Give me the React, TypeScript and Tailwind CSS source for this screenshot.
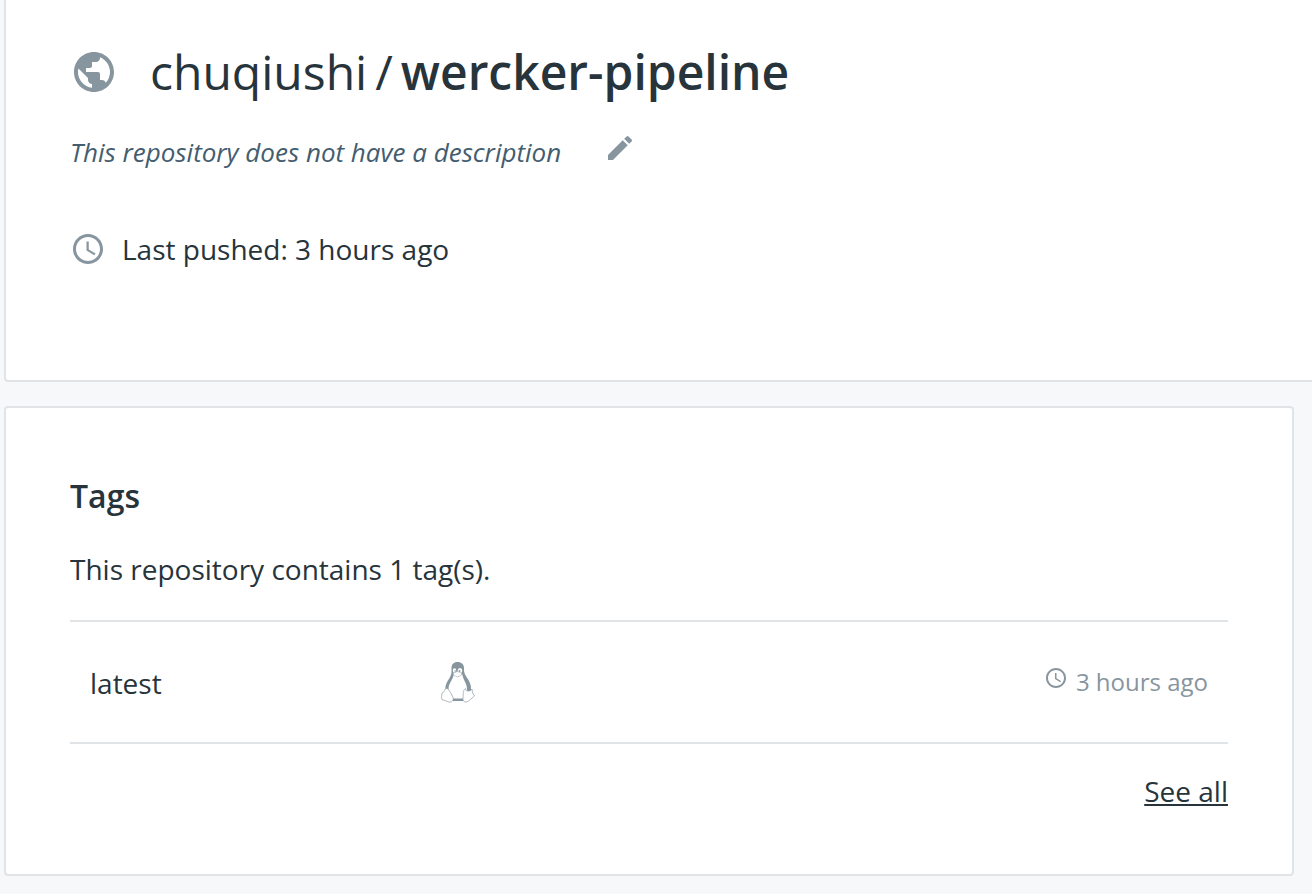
import React from "react";
import { MdPublic, MdEdit, MdAccessTime } from "react-icons/md";

function Penguin() {
  return (
    <svg role="img" aria-label="Linux" viewBox="0 0 34 42" className="h-[42px] w-[34px]" fill="none">
      <path d="M16.500 1c-4 0-6 2.500-6 6 0 4 .5 6-2 10C6 21 4 24 4.500 29l6 11h13.500l6-11c.5-5-1.500-9-4.500-13-2.500-4-2.500-5.500-2.500-9 0-3.500-2.500-6-6.500-6z" fill="#87959e" />
      <path d="M12.500 14c0 4-5 8-5 14 0 3 4 5 4.500 9.500h11c1-5 3-5.500 3-9.500 0-6-4.500-10-4.500-14.500l-4.500 2.500z" fill="#fff" />
      <ellipse cx="13.500" cy="9.500" rx="1.700" ry="2.300" fill="#fff" />
      <ellipse cx="19" cy="9.500" rx="2.300" ry="2.500" fill="#fff" />
      <circle cx="14.200" cy="10" r=".8" fill="#87959e" />
      <circle cx="18.500" cy="10" r=".9" fill="#87959e" />
      <path d="M12.200 12.500l4-2 4.800 2-.5 1.500-4 2-3.500-1.500z" fill="#fff" stroke="#a8b2b9" strokeWidth=".5" />
      <path d="M5.500 27.500c2.500 0 4 4.500 6.200 8 1.500 3.500-.7 6-3.700 5.500L1 38.500c-1-1.500 0-4 0-6.500 2.500 0 2-4.500 4.500-4.500z" fill="#fff" stroke="#8f9ca5" strokeWidth=".7" />
      <path d="M24.500 27.500c0 3 4.500 3.500 6.500.500l.5 4 2 3-6 5c-3 2-6 1-5.500-3 .5-4-.5-7.500 2.500-9.500z" fill="#fff" stroke="#8f9ca5" strokeWidth=".7" />
    </svg>
  );
}

export default function App() {
  return (
    <div className="min-h-screen bg-[#f7f8fa] pb-[18px] pl-1 font-['Open_Sans',sans-serif] text-[28px] text-[#27343b]">
      <header className="rounded-bl border-b-2 border-l-2 border-[#e0e4e7] bg-white px-16 pt-10 pb-28">
        <div className="flex items-center gap-8">
          <MdPublic className="size-12 text-[#87959e]" />
          <h1 className="text-[48px] leading-16">
            chuqiushi<span className="px-2">/</span><strong className="font-semibold">wercker-pipeline</strong>
          </h1>
        </div>
        <div className="mt-7 flex items-center gap-[43px]">
          <p className="text-[26px] leading-10 text-[#445d6e] italic">This repository does not have a description</p>
          <button type="button" aria-label="Edit description" className="-mt-2">
            <MdEdit className="size-8 text-[#87959e]" />
          </button>
        </div>
        <p className="mt-[58px] flex items-center gap-4 leading-[38px]">
          <MdAccessTime className="size-9 text-[#87959e]" />
          Last pushed: 3 hours ago
        </p>
      </header>
      <main className="mt-6 mr-[18px] rounded border-2 border-[#e0e4e7] bg-white px-16 pt-[66px] pb-[63px]">
        <h2 className="text-[32px] leading-11 font-semibold">Tags</h2>
        <p className="mt-[31px] leading-10">This repository contains 1 tag(s).</p>
        <table className="mt-[31px] w-full border-separate border-spacing-0 border-y-2 border-[#e0e4e7]">
          <tbody>
            <tr className="h-[120px]">
              <td className="w-[371px] p-0 pt-0.5 pl-5">latest</td>
              <td className="p-0"><Penguin /></td>
              <td className="p-0 pr-5">
                <span className="flex items-start justify-end gap-2 text-[24px] leading-[34px] text-[#87959e]">
                  <MdAccessTime className="mt-px size-6" />3 hours ago
                </span>
              </td>
            </tr>
          </tbody>
        </table>
        <div className="mt-[27px] text-right leading-10"><a href="#tags" className="underline">See all</a></div>
      </main>
    </div>
  );
}
